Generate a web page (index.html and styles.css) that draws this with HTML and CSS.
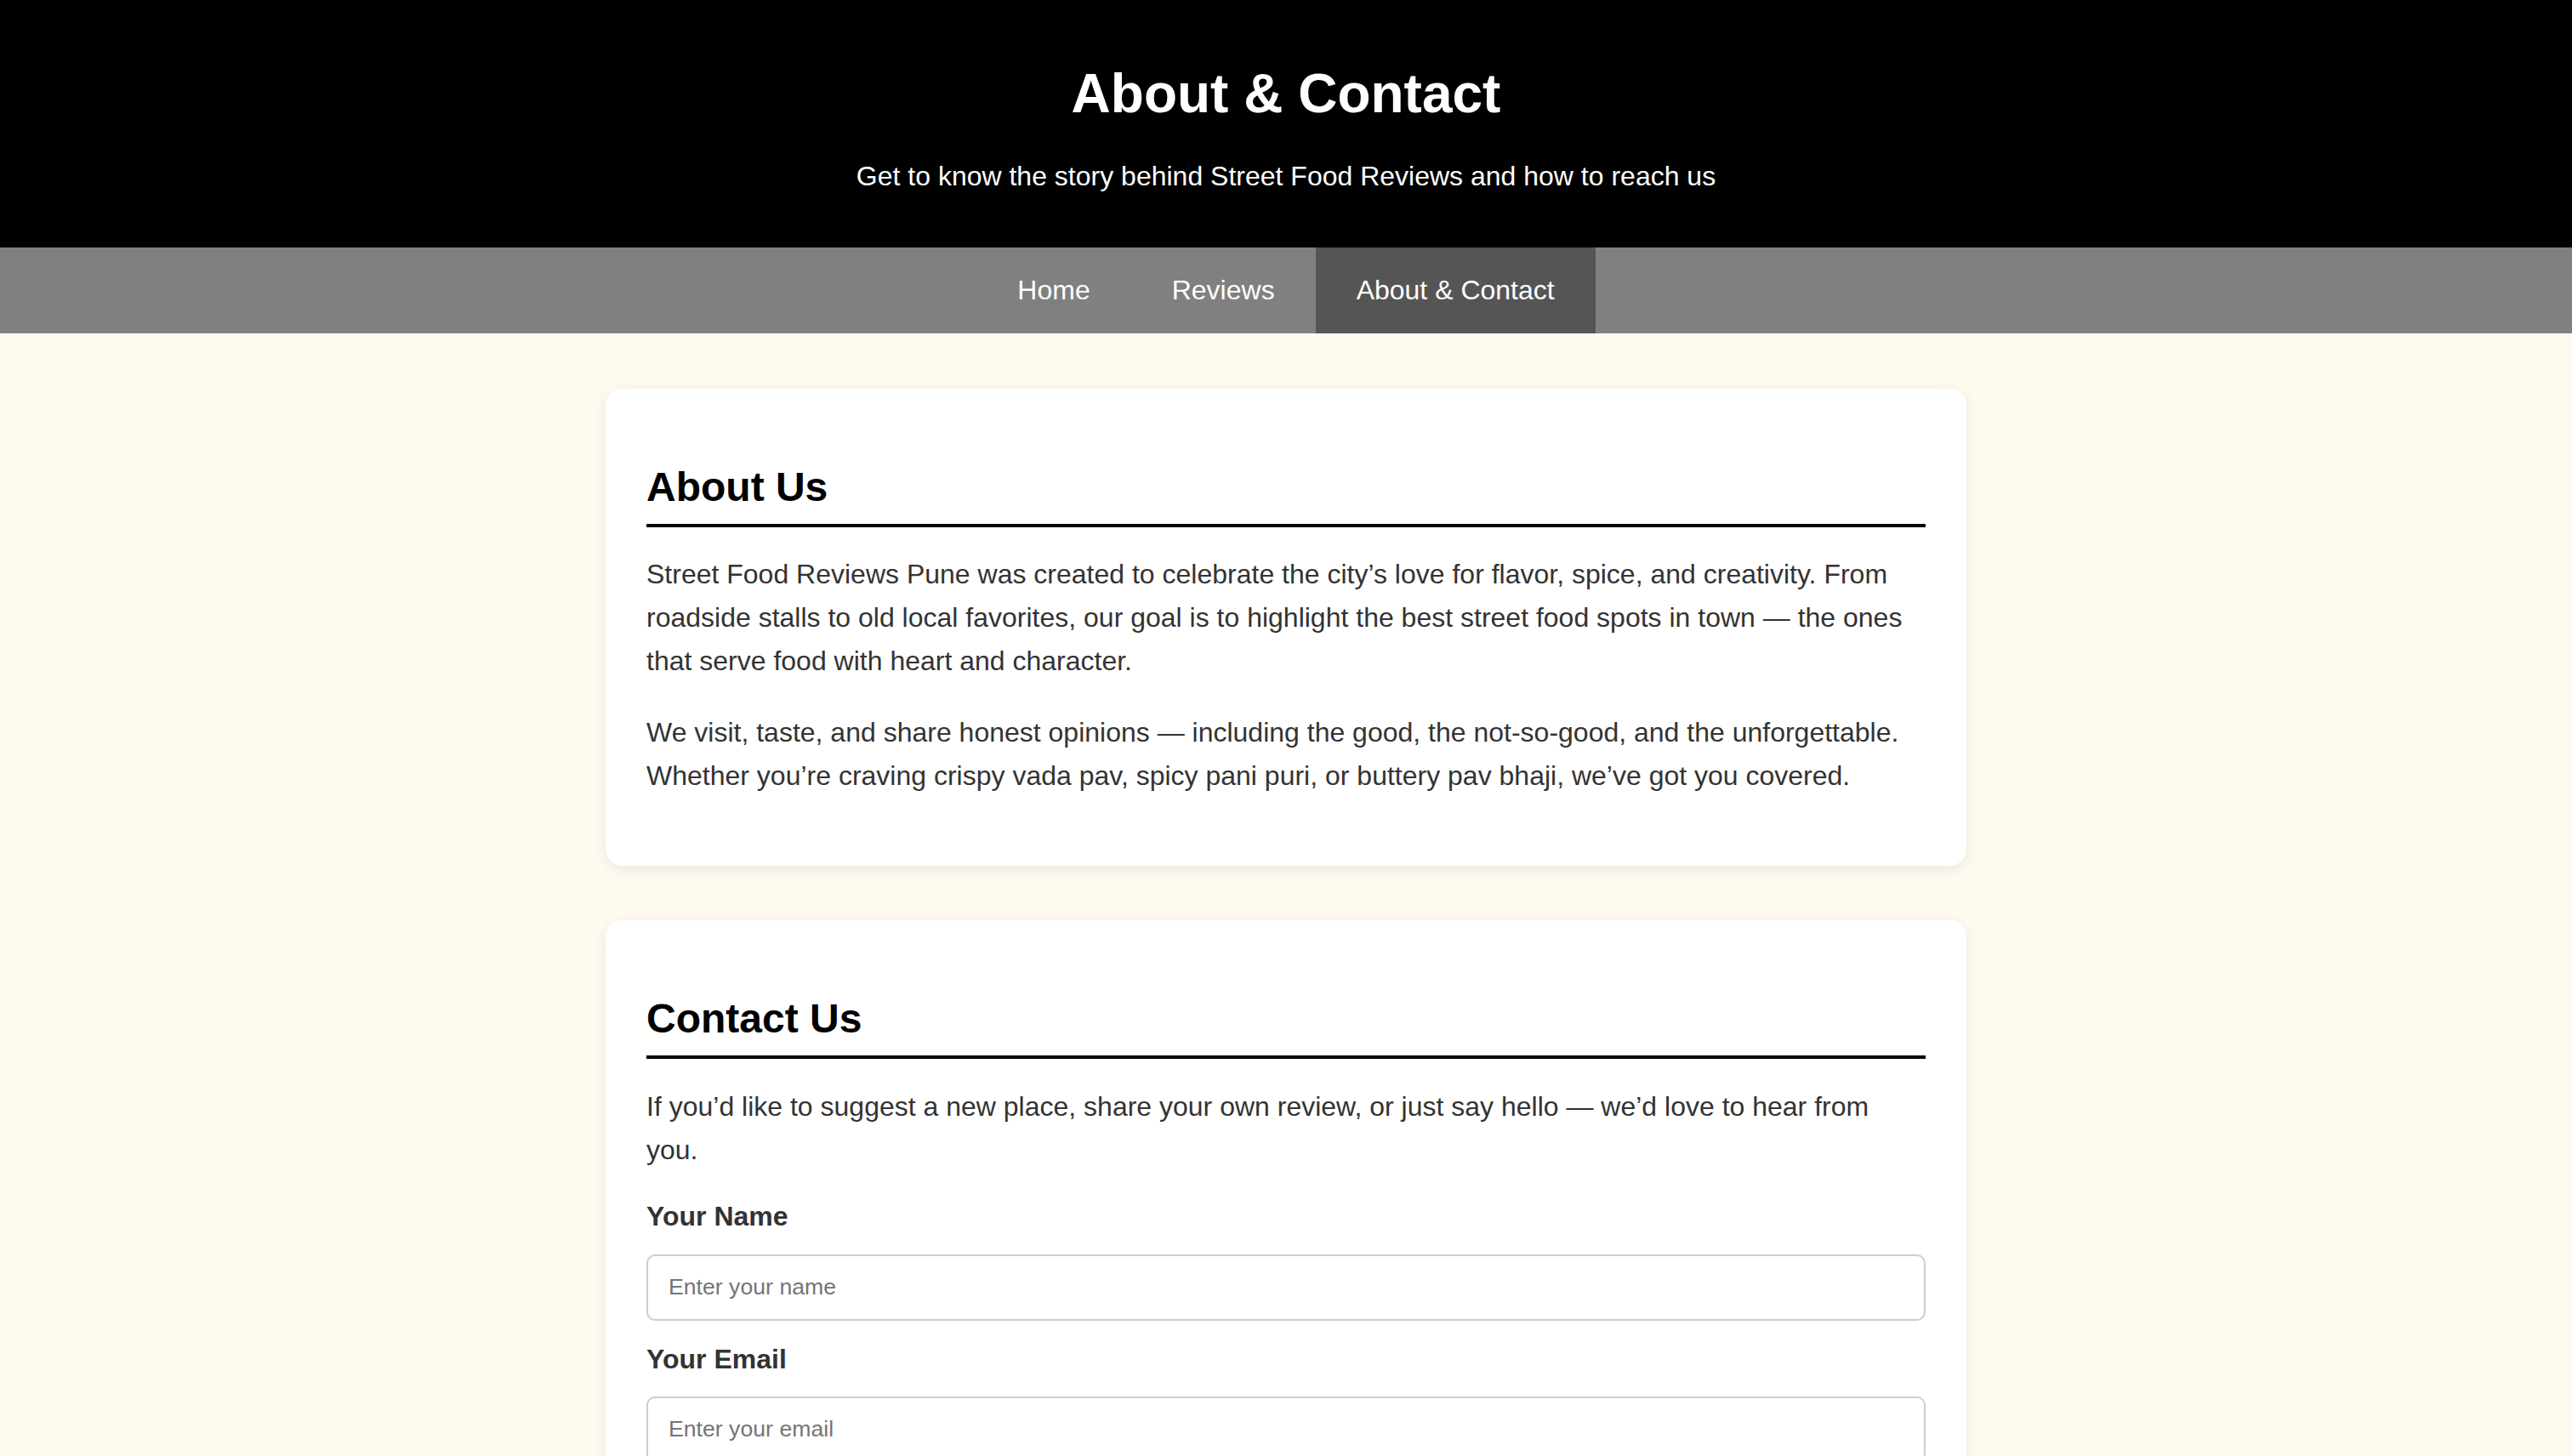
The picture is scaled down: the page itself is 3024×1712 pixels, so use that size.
FILE: index.html
```html
<!DOCTYPE html>
<html lang="en">
<head>
<meta charset="utf-8">
<title>About &amp; Contact - Street Food Reviews Pune</title>
<link rel="stylesheet" href="styles.css">
</head>
<body>
<header class="site-header">
  <h1 class="site-title">About &amp; Contact</h1>
  <p class="site-tagline">Get to know the story behind Street Food Reviews and how to reach us</p>
</header>
<nav class="site-nav">
  <a class="nav-link" href="#">Home</a>
  <a class="nav-link" href="#">Reviews</a>
  <a class="nav-link active" href="#">About &amp; Contact</a>
</nav>
<main class="content">
  <section class="card">
    <h2 class="card-title">About Us</h2>
    <p class="card-text">Street Food Reviews Pune was created to celebrate the city’s love for flavor, spice, and creativity. From roadside stalls to old local favorites, our goal is to highlight the best street food spots in town — the ones that serve food with heart and character.</p>
    <p class="card-text">We visit, taste, and share honest opinions — including the good, the not-so-good, and the unforgettable. Whether you’re craving crispy vada pav, spicy pani puri, or buttery pav bhaji, we’ve got you covered.</p>
  </section>
  <section class="card">
    <h2 class="card-title contact-title">Contact Us</h2>
    <p class="card-text intro">If you’d like to suggest a new place, share your own review, or just say hello — we’d love to hear from you.</p>
    <form class="contact-form">
      <label class="field-label" for="name">Your Name</label>
      <input class="field-input" id="name" type="text" placeholder="Enter your name">
      <label class="field-label" for="email">Your Email</label>
      <input class="field-input" id="email" type="email" placeholder="Enter your email">
      <label class="field-label" for="message">Your Message</label>
      <textarea class="field-input field-area" id="message" placeholder="Write your message"></textarea>
      <button class="submit-btn" type="button">Send Message</button>
    </form>
  </section>
</main>
</body>
</html>
```

FILE: styles.css
```css
html, body {
  margin: 0;
  padding: 0;
}

body {
  background: #fffaf0;
  font-family: "Liberation Sans", Arial, Helvetica, sans-serif;
  color: #333;
}

.site-header {
  background: #000;
  color: #fff;
  text-align: center;
  padding: 30px 0 33px;
}

.site-title {
  font-size: 64px;
  font-weight: bold;
  margin: 43px 0 42px;
  line-height: normal;
}

.site-tagline {
  font-size: 32px;
  margin: 0 0 32px;
  line-height: normal;
}

.site-nav {
  background: #808080;
  display: flex;
  justify-content: center;
}

.nav-link {
  display: block;
  color: #fff;
  text-decoration: none;
  font-size: 32px;
  line-height: normal;
  padding: 32px 48px;
}

.nav-link.active {
  background: #555;
}

.content {
  max-width: 1600px;
  margin: 65px auto 64px;
}

.card {
  background: #fff;
  border-radius: 20px;
  box-shadow: 0 4px 16px rgba(0, 0, 0, 0.08);
  padding: 48px;
  margin-bottom: 64px;
}

.card-title {
  color: #000;
  font-size: 48px;
  font-weight: bold;
  line-height: normal;
  margin: 40px 0 30px;
  padding-bottom: 16px;
  border-bottom: 4px solid #000;
}

.card-title.contact-title {
  margin-bottom: 31px;
}

.card-text {
  font-size: 32px;
  line-height: 1.6;
  margin: 0 0 32px;
}

.card-text.intro {
  margin-bottom: 27px;
}

.contact-form {
  display: flex;
  flex-direction: column;
}

.field-label {
  font-size: 32px;
  font-weight: bold;
  line-height: 1.6;
  margin-bottom: 18px;
}

.field-input {
  box-sizing: border-box;
  width: 100%;
  height: 78px;
  padding: 0 24px;
  border: 2px solid #ccc;
  border-radius: 10px;
  font-family: "Liberation Sans", Arial, Helvetica, sans-serif;
  font-size: 26.67px;
  color: #333;
  background: #fff;
  margin: 0 0 20px;
}

.field-input::placeholder {
  color: #757575;
}

.field-area {
  height: 200px;
  padding: 20px 24px;
  resize: vertical;
}

.submit-btn {
  align-self: flex-start;
  background: #000;
  color: #fff;
  border: none;
  border-radius: 10px;
  font-family: "Liberation Sans", Arial, Helvetica, sans-serif;
  font-size: 32px;
  padding: 20px 40px;
}
```
